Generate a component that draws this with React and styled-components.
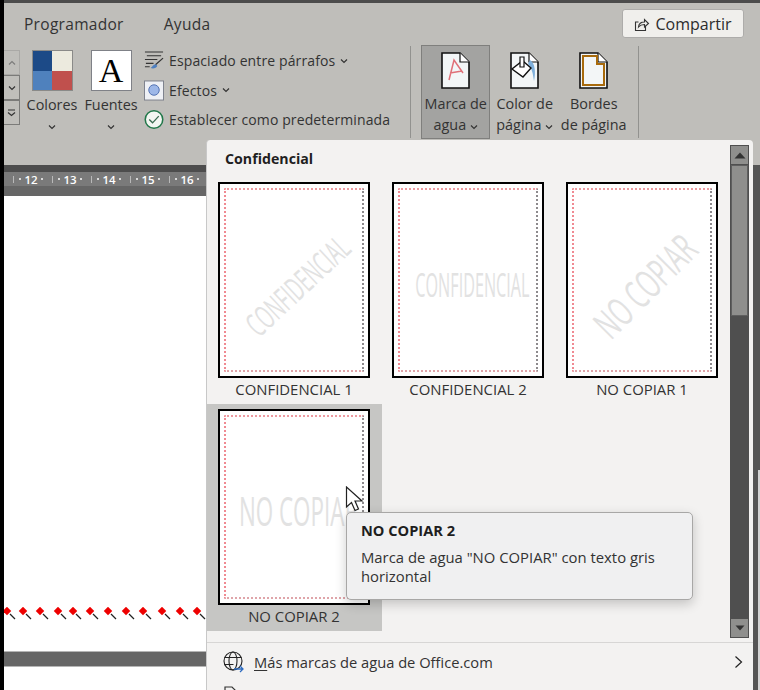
import React from "react";
import styled, { createGlobalStyle } from "styled-components";

const Global = createGlobalStyle`
  html, body { margin: 0; padding: 0; background: #fff; }
  #root { width: 760px; height: 690px; }
  * { box-sizing: border-box; }
`;

const FONT = `"Open Sans", "Noto Sans", "Liberation Sans", sans-serif`;

const Page = styled.div`
  position: relative;
  width: 760px;
  height: 690px;
  overflow: hidden;
  display: grid;
  grid-template-columns: 4px 1fr;
  font-family: ${FONT};
  color: #2c2c2c;
`;
const Edge = styled.div`background: #000;`;
const Main = styled.div`
  display: flex;
  flex-direction: column;
  min-width: 0;
`;
const TopEdge = styled.div`height: 3px; background: #4c4c4c;`;
const Chrome = styled.div`
  background: #bfbeba;
  height: 162px;
  display: flex;
  flex-direction: column;
`;
const TabRow = styled.div`
  height: 41px;
  display: flex;
  align-items: center;
  padding: 0 16px 0 20px;
  gap: 40px;
`;
const Tab = styled.span`
  font-size: 15.5px;
  letter-spacing: 0.3px;
  color: #333;
`;
const ShareButton = styled.button`
  margin-left: auto;
  width: 122px;
  height: 29px;
  background: #f0efec;
  border: 1px solid #adacaa;
  border-radius: 3px;
  display: flex;
  align-items: center;
  justify-content: center;
  gap: 5px;
  font: 500 16px ${FONT};
  color: #2c2c2c;
  padding: 0;
`;
const Ribbon = styled.div`
  display: flex;
  align-items: flex-start;
  height: 95px;
`;
const Spinner = styled.div`
  width: 16px;
  display: flex;
  flex-direction: column;
  margin-top: 6px;
`;
const SpinBtn = styled.div`
  height: 25px;
  border: 1px solid ${p => (p.$dim ? "#aaa9a6" : "#7b7b79")};
  border-left: none;
  display: flex;
  align-items: center;
  justify-content: center;
  color: ${p => (p.$dim ? "#7d7d7b" : "#333")};
`;
const ThemeBtn = styled.div`
  display: flex;
  flex-direction: column;
  align-items: center;
  width: ${p => p.$w}px;
  margin-left: ${p => p.$ml || 0}px;
  padding-top: 6px;
`;
const ColorSwatch = styled.div`
  width: 41px;
  height: 41px;
  display: grid;
  grid-template-columns: 1fr 1fr;
  border: 1px solid #8a8a88;
`;
const Cell = styled.div`background: ${p => p.$c};`;
const FontSwatch = styled.div`
  width: 41px;
  height: 41px;
  background: #fff;
  border: 1px solid #7f8187;
  display: flex;
  align-items: center;
  justify-content: center;
  font: 34px "Liberation Serif", serif;
  color: #000;
`;
const RibbonLabel = styled.div`
  font-size: 14.4px;
  line-height: 20.5px;
  color: #333;
  text-align: center;
  white-space: nowrap;
  margin-top: ${p => p.$mt || 0}px;
`;
const Stack = styled.div`
  display: flex;
  flex-direction: column;
  margin-left: 5px;
  padding-top: 2px;
`;
const StackRow = styled.div`
  height: 29.5px;
  display: flex;
  align-items: center;
  gap: 5px;
  font-size: 14px;
  letter-spacing: 0.12px;
  white-space: nowrap;
  color: #333;
`;
const IconSlot = styled.span`
  width: 20px;
  height: 22px;
  display: flex;
  align-items: center;
  justify-content: center;
  flex: none;
`;
const Divider = styled.div`
  width: 1px;
  height: 92px;
  margin-top: 2px;
  background: #92928f;
  margin-left: ${p => p.$ml}px;
`;
const PageBtn = styled.div`
  width: ${p => p.$w}px;
  height: 94px;
  margin-top: 1px;
  margin-left: ${p => p.$ml || 0}px;
  display: flex;
  flex-direction: column;
  align-items: center;
  padding-top: 6px;
  background: ${p => (p.$on ? "#a3a3a1" : "transparent")};
  border: 1px solid ${p => (p.$on ? "#7f7f7d" : "transparent")};
  svg { flex: none; }
`;
const RulerTop = styled.div`height: 7px; background: #4d4d4d;`;
const Ruler = styled.div`
  height: 14px;
  background: #7a7a7a;
  display: flex;
  align-items: center;
  color: #fff;
  font: 600 11.5px ${FONT};
  white-space: nowrap;
  padding-left: 9px;
`;
const RulerCell = styled.span`
  width: 39px;
  flex: none;
  display: flex;
  align-items: center;
`;
const RulerTick = styled.i`
  width: 1px;
  height: 7px;
  background: #b9b9b9;
  flex: none;
`;
const RulerNum = styled.span`
  flex: 1;
  display: flex;
  justify-content: center;
  align-items: center;
  gap: 3px;
  margin: 0 9px 0 5px;
  &::before, &::after {
    content: "";
    width: 2px;
    height: 2px;
    background: #d8d8d8;
    flex: none;
  }
`;
const RulerBottom = styled.div`height: 10px; background: #666;`;
const Doc = styled.div`
  height: 455px;
  background: #fff;
  padding-top: 411px;
`;
const InkLine = styled.svg`display: block;`;
const Band = styled.div`
  height: 16px;
  background: #666;
  border-top: 1px solid #b5b5b5;
  border-bottom: 1px solid #b5b5b5;
`;
const DocRest = styled.div`flex: 1; background: #fff;`;

const RightEdge = styled.div`
  position: absolute;
  right: 0;
  top: 165px;
  bottom: 0;
  width: 7px;
  background: #555;
  &::after {
    content: "";
    position: absolute;
    right: 0;
    top: 305px;
    bottom: 0;
    width: 2px;
    background: #d4d4d4;
  }
`;
const Menu = styled.div`
  position: absolute;
  left: 206px;
  top: 140px;
  width: 547px;
  height: 560px;
  background: #f3f2f1;
  border-radius: 4px 4px 0 0;
  border-left: 1px solid #c8c8c8;
  display: grid;
  grid-template-columns: 1fr;
  grid-template-rows: 502px auto;
`;
const Gallery = styled.div`
  display: grid;
  grid-template-columns: 1fr 23px;
  min-height: 0;
`;
const GalleryBody = styled.div`
  padding: 9px 0 0 0;
`;
const GroupTitle = styled.div`
  font: 700 14.2px ${FONT};
  color: #1f1f1f;
  padding-left: 18px;
  height: 20px;
  line-height: 20px;
`;
const Grid = styled.div`
  display: grid;
  grid-template-columns: repeat(3, 174px);
  grid-auto-rows: auto;
  margin-top: 2px;
`;
const Tile = styled.div`
  height: ${p => (p.$on ? 227 : 233)}px;
  padding: ${p => (p.$on ? "5px" : "11px")} 0 0 11px;
  background: ${p => (p.$on ? "#c6c6c4" : "transparent")};
  display: flex;
  flex-direction: column;
  width: ${p => (p.$on ? 175 : 174)}px;
`;
const Sheet = styled.div`
  width: 152px;
  height: 196px;
  flex: none;
  background: #fff;
  border: 2px solid #000;
  padding: 4px;
`;
const Dotted = styled.div`
  width: 100%;
  height: 100%;
  border-style: dotted;
  border-width: 2px;
  border-color: #ec9aa0 #8d8a8d #dfa5aa #f08a92;
  display: flex;
  align-items: center;
  justify-content: center;
`;
const Stamp = styled.span`
  font: 400 ${p => p.$size}px "Open Sans", sans-serif;
  color: #e2e2e2;
  white-space: nowrap;
  display: inline-block;
  flex: none;
  transform: translate(${p => p.$x}px, ${p => p.$y}px) rotate(${p => p.$r}deg) scaleX(${p => p.$sx});
`;
const Caption = styled.div`
  width: 152px;
  text-align: center;
  font-size: 14.9px;
  line-height: 20px;
  color: #333;
  margin-top: 1px;
  white-space: nowrap;
`;
const Scrollbar = styled.div`
  margin-top: 5px;
  width: 19px;
  height: 493px;
  background: #4f4f4f;
  display: flex;
  flex-direction: column;
  border: 1px solid #4f4f4f;
`;
const ScrollBtn = styled.div`
  height: 18px;
  background: #8f8f8d;
  display: flex;
  align-items: center;
  justify-content: center;
  flex: none;
`;
const Thumb = styled.div`
  height: 151px;
  background: #8f8f8d;
  border: 1px solid #5f5f5f;
  margin-top: 1px;
  flex: none;
`;
const Track = styled.div`flex: 1;`;
const MenuList = styled.div`
  border-top: 1px solid #d7d6d5;
  padding: 6px 0 0 15px;
`;
const MenuRow = styled.div`
  height: 26px;
  display: flex;
  align-items: center;
  gap: 10px;
  padding-right: 10px;
  font-size: 14.7px;
  color: #333;
`;
const RowText = styled.span`
  flex: 1;
  u { text-underline-offset: 2px; }
`;
const SmallDoc = styled.div`
  margin: 6px 0 0 2px;
`;
const Tip = styled.div`
  position: absolute;
  left: 346px;
  top: 512px;
  width: 347px;
  height: 88px;
  background: #f0f0f1;
  border: 1px solid #a8a7a6;
  border-radius: 5px;
  box-shadow: 0 4px 12px rgba(0, 0, 0, 0.2);
  padding: 6px 14px;
`;
const TipTitle = styled.div`
  font: 700 14.6px/22px ${FONT};
  color: #1e1e1e;
`;
const TipBody = styled.div`
  font-size: 14.85px;
  line-height: 19px;
  color: #333;
  margin-top: 7px;
  white-space: nowrap;
`;
const Pointer = styled.svg`
  position: absolute;
  left: 345px;
  top: 486px;
`;

const Chev = ({ size = 8, color = "#333" }) => (
  <svg width={size} height={size * 0.75} viewBox="0 0 8 6" fill="none">
    <path d="M1 1.5 4 4.5 7 1.5" stroke={color} strokeWidth="1.2" />
  </svg>
);

const ShareIcon = () => (
  <svg width="16" height="16" viewBox="0 0 16 16" fill="none" stroke="#333" strokeWidth="1.1">
    <path d="M4.5 6H1.5v8.5h10V10" />
    <path d="M4.5 11c.3-3.2 2.6-5 6-5V3.5l4 4-4 3.5V8.5c-2.5 0-4.5 .7-6 2.5Z" />
  </svg>
);

const SpacingIcon = () => (
  <svg width="21" height="21" viewBox="0 0 21 21" fill="none">
    <path d="M1 1.5h19M3 5.5h15M1 9.5h13M2 13.5h8M1 17h5" stroke="#333" strokeWidth="1.1" />
    <path d="M20 8 12 15" stroke="#333" strokeWidth="1.3" />
    <path d="M12 14.5c-2 .2-2.8 2-5 4 3 .7 6 .2 7-2.4Z" fill="#4d7fc0" />
  </svg>
);

const EffectsIcon = () => (
  <svg width="21" height="21" viewBox="0 0 21 21">
    <rect x=".5" y=".5" width="20" height="20" fill="#eef0f5" stroke="#7b7f8a" />
    <circle cx="10.5" cy="10" r="5.5" fill="#9db7e8" stroke="#4f6fb0" strokeWidth="1" />
  </svg>
);

const DefaultIcon = () => (
  <svg width="21" height="21" viewBox="0 0 21 21" fill="none">
    <circle cx="10.5" cy="10.5" r="9.2" fill="#f3f6f2" stroke="#22784a" strokeWidth="1.6" />
    <path d="M5.5 10.5 9 14l6.5-7" stroke="#3a6a50" strokeWidth="1.4" />
  </svg>
);

const PageShape = ({ children }) => (
  <svg width="29" height="37" viewBox="0 0 29 37" fill="none">
    <path d="M1 1h18l9 9v26H1Z" fill="#f3f6f7" stroke="#111" strokeWidth="1.6" />
    <path d="M19 1v9h9" fill="#fff" stroke="#111" strokeWidth="1.2" />
    {children}
  </svg>
);

const inkCentres = [3, 19, 36, 54, 69, 86, 104, 122, 139, 158, 176, 193];

const Ink = () => (
  <InkLine width="204" height="14" viewBox="0 0 204 14">
    {inkCentres.map(c => (
      <g key={c} transform={`translate(${c} 0)`}>
        <rect x="-3" y="1" width="6" height="6" fill="#ee0000" transform="rotate(45 0 4)" />
        <path d="M3 7 8 12" stroke="#222" strokeWidth="1.2" />
      </g>
    ))}
  </InkLine>
);

const tiles = [
  { name: "CONFIDENCIAL 1", text: "CONFIDENCIAL", size: 33, sx: 0.55, r: -43, x: 3, y: 5 },
  { name: "CONFIDENCIAL 2", text: "CONFIDENCIAL", size: 33, sx: 0.49, r: 0, x: 4, y: 4 },
  { name: "NO COPIAR 1", text: "NO COPIAR", size: 40, sx: 0.59, r: -45, x: 3, y: 5 },
  { name: "NO COPIAR 2", text: "NO COPIAR", size: 40, sx: 0.56, r: 0, x: 5, y: 3, on: true },
];

export default function App() {
  return (
    <Page>
      <Global />
      <Edge />
      <Main>
        <TopEdge />
        <Chrome>
          <TabRow>
            <Tab>Programador</Tab>
            <Tab>Ayuda</Tab>
            <ShareButton>
              <ShareIcon />
              Compartir
            </ShareButton>
          </TabRow>
          <Ribbon>
            <Spinner>
              <SpinBtn $dim>
                <svg width="8" height="6" viewBox="0 0 8 6" fill="none">
                  <path d="M1 4.5 4 1.5 7 4.5" stroke="currentColor" strokeWidth="1.2" />
                </svg>
              </SpinBtn>
              <SpinBtn><Chev /></SpinBtn>
              <SpinBtn>
                <svg width="9" height="8" viewBox="0 0 9 8" fill="none">
                  <path d="M1 1h7M1 3.5 4.5 6.5 8 3.5" stroke="#333" strokeWidth="1.2" />
                </svg>
              </SpinBtn>
            </Spinner>
            <ThemeBtn $w={56} $ml={4}>
              <ColorSwatch>
                <Cell $c="#1c4a87" />
                <Cell $c="#eceade" />
                <Cell $c="#4f81bd" />
                <Cell $c="#c0504d" />
              </ColorSwatch>
              <RibbonLabel $mt={4}>Colores</RibbonLabel>
              <RibbonLabel $mt={-1}><Chev /></RibbonLabel>
            </ThemeBtn>
            <ThemeBtn $w={56} $ml={3}>
              <FontSwatch>A</FontSwatch>
              <RibbonLabel $mt={4}>Fuentes</RibbonLabel>
              <RibbonLabel $mt={-1}><Chev /></RibbonLabel>
            </ThemeBtn>
            <Stack>
              <StackRow>
                <IconSlot><SpacingIcon /></IconSlot>
                Espaciado entre párrafos <Chev />
              </StackRow>
              <StackRow>
                <IconSlot><EffectsIcon /></IconSlot>
                Efectos <Chev />
              </StackRow>
              <StackRow>
                <IconSlot><DefaultIcon /></IconSlot>
                Establecer como predeterminada
              </StackRow>
            </Stack>
            <Divider $ml={20} />
            <PageBtn $on $w={69} $ml={10}>
              <PageShape>
                <path d="M8 28 13 8 22 21M9 21l12-2" stroke="#e07078" strokeWidth="1.5" />
              </PageShape>
              <RibbonLabel $mt={5}>Marca de<br />agua <Chev /></RibbonLabel>
            </PageBtn>
            <PageBtn $w={69}>
              <PageShape>
                <path d="M20 8c5 3 6 12 4 21-1-7-2-13-6-17Z" fill="#7fb0dc" />
                <path d="M11 10h3l7 6-8 9-11-8 9-7Z" fill="#fff" stroke="#111" strokeWidth="1.4" />
                <path d="M10 5h4v10h-4Z" fill="#fff" stroke="#111" strokeWidth="1.2" />
              </PageShape>
              <RibbonLabel $mt={5}>Color de<br />página <Chev /></RibbonLabel>
            </PageBtn>
            <PageBtn $w={69}>
              <PageShape>
                <path d="M4 4h14v8h7v21H4Z" stroke="#a86a0c" strokeWidth="2" />
              </PageShape>
              <RibbonLabel $mt={5}>Bordes<br />de página</RibbonLabel>
            </PageBtn>
            <Divider $ml={10} />
          </Ribbon>
        </Chrome>
        <RulerTop />
        <Ruler>
          {[12, 13, 14, 15, 16].map(n => (
            <RulerCell key={n}>
              <RulerTick />
              <RulerNum>{n}</RulerNum>
            </RulerCell>
          ))}
        </Ruler>
        <RulerBottom />
        <Doc>
          <Ink />
        </Doc>
        <Band />
        <DocRest />
      </Main>
      <RightEdge />
      <Menu>
        <Gallery>
          <GalleryBody>
            <GroupTitle>Confidencial</GroupTitle>
            <Grid>
              {tiles.map(t => (
                <Tile key={t.name} $on={t.on}>
                  <Sheet>
                    <Dotted>
                      <Stamp $size={t.size} $sx={t.sx} $r={t.r} $x={t.x} $y={t.y}>{t.text}</Stamp>
                    </Dotted>
                  </Sheet>
                  <Caption>{t.name}</Caption>
                </Tile>
              ))}
            </Grid>
          </GalleryBody>
          <Scrollbar>
            <ScrollBtn>
              <svg width="12" height="7" viewBox="0 0 12 7"><path d="M6 .5 11.5 6.5H.5Z" fill="#333" /></svg>
            </ScrollBtn>
            <Thumb />
            <Track />
            <ScrollBtn>
              <svg width="10" height="6" viewBox="0 0 10 6"><path d="M.5 .5h9L5 5.5Z" fill="#333" /></svg>
            </ScrollBtn>
          </Scrollbar>
        </Gallery>
        <MenuList>
          <MenuRow>
            <svg width="22" height="22" viewBox="0 0 22 22" fill="none" stroke="#222" strokeWidth="1.1">
              <circle cx="11" cy="10" r="9" />
              <ellipse cx="11" cy="10" rx="4" ry="9" />
              <path d="M2.5 6.5h17M2.5 13.5h9" />
              <path d="M12 18h9M18 15l3 3-3 3" stroke="#2e6cc0" strokeWidth="1.3" />
            </svg>
            <RowText><u>M</u>ás marcas de agua de Office.com</RowText>
            <svg width="9" height="14" viewBox="0 0 9 14" fill="none">
              <path d="M1.5 1.5 7.5 7l-6 5.5" stroke="#222" strokeWidth="1.2" />
            </svg>
          </MenuRow>
          <SmallDoc>
            <svg width="13" height="12" viewBox="0 0 13 12" fill="none" stroke="#333" strokeWidth="1.2">
              <path d="M1 12V1h7l4 4v7" />
            </svg>
          </SmallDoc>
        </MenuList>
      </Menu>
      <Pointer width="20" height="28" viewBox="0 0 20 28">
        <path d="M1.5 1v20l5-4.5 3.5 8 3.5-1.5-3.5-8h7Z" fill="#fff" stroke="#222" strokeWidth="1.2" />
      </Pointer>
      <Tip>
        <TipTitle>NO COPIAR 2</TipTitle>
        <TipBody>Marca de agua "NO COPIAR" con texto gris<br />horizontal</TipBody>
      </Tip>
    </Page>
  );
}
